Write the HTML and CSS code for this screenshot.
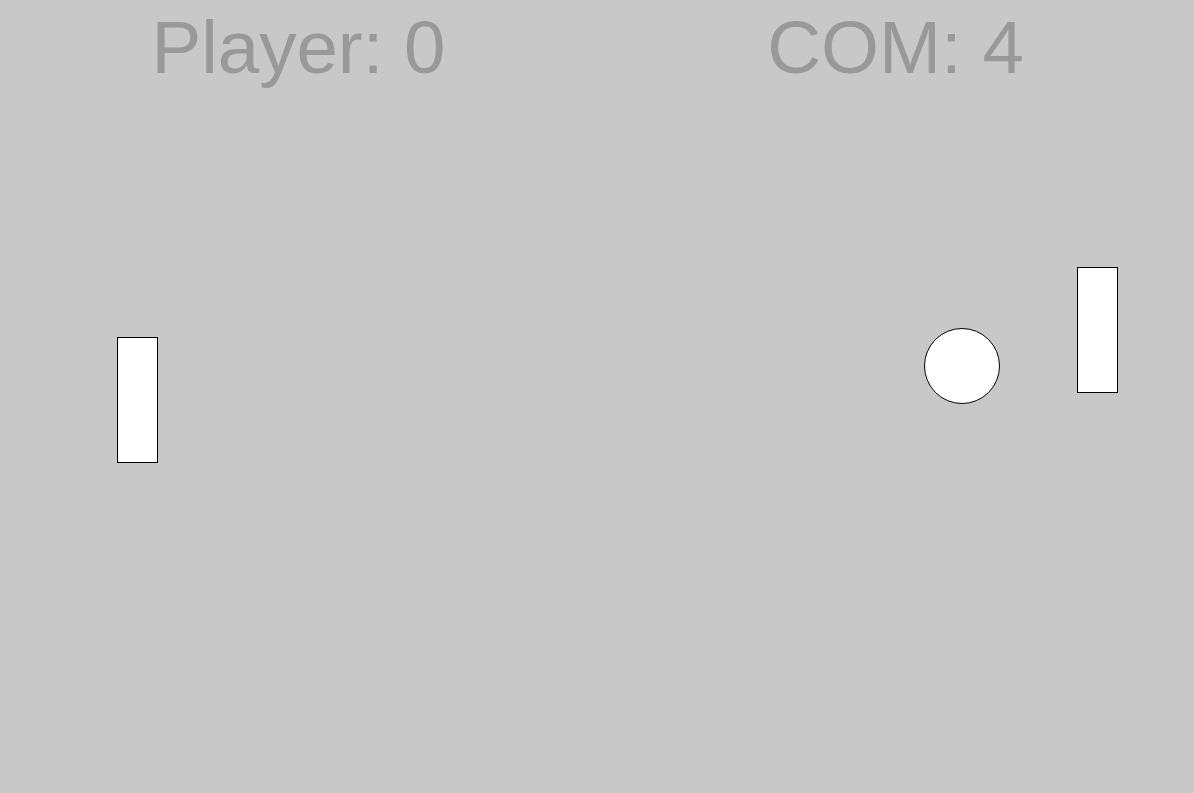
FILE: index.html
```html
<!DOCTYPE html>
<html>
<head>
<meta charset="utf-8">
<link rel="stylesheet" href="styles.css">
</head>
<body>
<main class="court">
  <header class="scores">
    <div class="score">Player: 0</div>
    <div class="score">COM: 4</div>
  </header>
  <div class="paddle paddle-left"></div>
  <div class="ball"></div>
  <div class="paddle paddle-right"></div>
</main>
</body>
</html>
```
FILE: styles.css
```css
html, body {
  margin: 0;
  padding: 0;
  background: #c8c8c8;
}
.court {
  position: relative;
  width: 1194px;
  height: 793px;
  overflow: hidden;
  background: #c8c8c8;
}
.scores {
  display: grid;
  grid-template-columns: 1fr 1fr;
  padding-top: 10px;
}
.score {
  text-align: center;
  font-family: "Liberation Sans", Arial, sans-serif;
  font-size: 74.5px;
  line-height: 75px;
  color: #999999;
}
.paddle {
  position: absolute;
  box-sizing: border-box;
  width: 41px;
  height: 126px;
  background: #fff;
  border: 1px solid #000;
}
.paddle-left {
  left: 117px;
  top: 337px;
}
.paddle-right {
  left: 1077px;
  top: 267px;
}
.ball {
  position: absolute;
  box-sizing: border-box;
  left: 924px;
  top: 328px;
  width: 76px;
  height: 76px;
  border-radius: 50%;
  background: #fff;
  border: 1px solid #000;
}
```
